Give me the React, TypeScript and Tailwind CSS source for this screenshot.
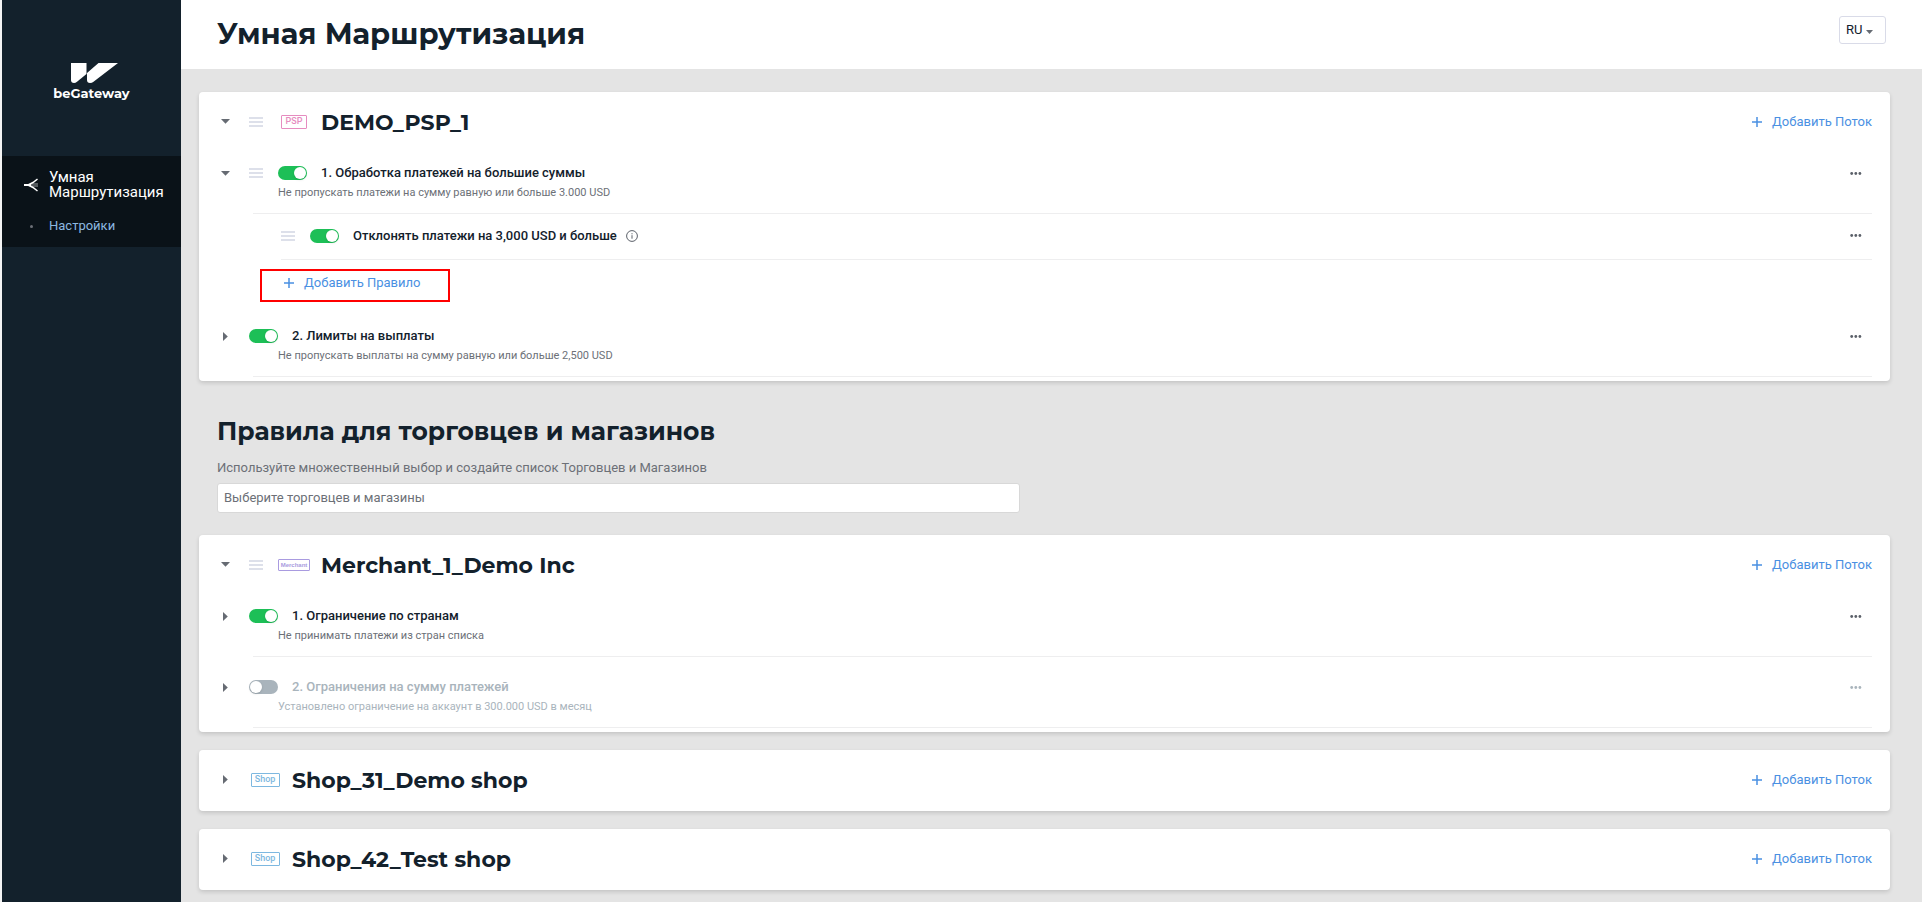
import { useState } from 'react';
import type { ReactNode } from 'react';

type BadgeKind = 'psp' | 'merchant' | 'shop';

function Caret({ open, label }: { open: boolean; label: string }) {
  return (
    <button aria-label={label} aria-expanded={open} className="flex h-5 w-[17px] shrink-0 cursor-pointer items-center justify-center text-[#666b73]">
      {open ? (
        <svg className="h-[5px] w-[9px]" viewBox="0 0 9 5" fill="currentColor">
          <path d="M0 0h9L4.500 4.800z" />
        </svg>
      ) : (
        <svg className="h-[9px] w-[5px]" viewBox="0 0 5 9" fill="currentColor">
          <path d="M0 0v9l4.800-4.500z" />
        </svg>
      )}
    </button>
  );
}

function DragHandle() {
  return (
    <svg className="h-[10px] w-[14px] shrink-0 cursor-move" viewBox="0 0 14 10" fill="#dde0ea">
      <path d="M0 0h14v2H0zM0 4h14v2H0zM0 8h14v2H0z" />
    </svg>
  );
}

function Toggle({ defaultOn, label }: { defaultOn: boolean; label: string }) {
  const [on, setOn] = useState(defaultOn);
  return (
    <label className="-mr-px flex shrink-0 cursor-pointer">
      <input type="checkbox" checked={on} onChange={() => setOn(!on)} aria-label={label} className="peer sr-only" />
      <span className="flex h-[14px] w-[29px] items-center rounded-full bg-[#a9b4bc] px-px peer-checked:justify-end peer-checked:bg-[#1dbf57]">
        <span className="h-3 w-3 rounded-full bg-white shadow" />
      </span>
    </label>
  );
}

function Badge({ kind }: { kind: BadgeKind }) {
  return (
    <span className="-mr-1 flex w-8 shrink-0 justify-center leading-none">
      {kind === 'psp' && (
        <span className="flex h-[14px] w-[26px] items-center justify-center rounded-[1px] border border-[#e68cc0] text-[9px] font-medium text-[#e68cc0]">PSP</span>
      )}
      {kind === 'merchant' && (
        <span className="flex h-3 w-8 items-center justify-center rounded-[1px] border border-[#a99be0] font-['Liberation_Sans',sans-serif] text-[6px] font-bold text-[#a99be0]">Merchant</span>
      )}
      {kind === 'shop' && (
        <span className="flex h-[14px] w-[29px] items-center justify-center rounded-[1px] border border-[#7db8e0] text-[9px] font-medium text-[#7db8e0]">Shop</span>
      )}
    </span>
  );
}

function AddButton({ children }: { children: ReactNode }) {
  return (
    <button className="flex shrink-0 cursor-pointer items-center gap-[10px] text-[13px] leading-5 text-[#4a90e2]">
      <svg className="h-[10px] w-[10px]" viewBox="0 0 10 10" stroke="currentColor" strokeWidth="1.5">
        <path d="M5 0v10M0 5h10" />
      </svg>
      {children}
    </button>
  );
}

function MoreButton({ muted = false }: { muted?: boolean }) {
  return (
    <button aria-label="Действия" className={`mr-[10px] ml-auto flex h-5 shrink-0 cursor-pointer items-center ${muted ? 'text-[#a9b4bc]' : 'text-[#5b6069]'}`}>
      <svg className="h-[3px] w-[12px]" viewBox="0 0 12 3" fill="currentColor">
        <circle cx="1.7" cy="1.5" r="1.4" />
        <circle cx="5.8" cy="1.5" r="1.4" />
        <circle cx="9.9" cy="1.5" r="1.4" />
      </svg>
    </button>
  );
}

function Card({ title, kind, open = false, draggable = false, children }: {
  title: string;
  kind: BadgeKind;
  open?: boolean;
  draggable?: boolean;
  children?: ReactNode;
}) {
  return (
    <section className="rounded bg-white px-[18px] shadow-[0_2px_4px_rgba(0,0,0,0.14)]">
      <div className="flex h-[61px] items-center gap-[15px] pb-0.5">
        <Caret open={open} label={title} />
        {draggable && <DragHandle />}
        <Badge kind={kind} />
        <h2 className="pt-0.5 font-['Montserrat','Inter',sans-serif] text-[22px] leading-7 font-bold">{title}</h2>
        <div className="ml-auto">
          <AddButton>Добавить Поток</AddButton>
        </div>
      </div>
      {children && <div className="flex flex-col gap-[10px] pb-1">{children}</div>}
    </section>
  );
}

function Flow({ title, note, open = false, draggable = false, enabled = true, children }: {
  title: string;
  note: string;
  open?: boolean;
  draggable?: boolean;
  enabled?: boolean;
  children?: ReactNode;
}) {
  return (
    <div>
      <div className="flex h-[30px] items-center gap-[15px] pt-[10px]">
        <Caret open={open} label={title} />
        {draggable && <DragHandle />}
        <Toggle defaultOn={enabled} label={title} />
        <h3 className={`text-[13px] leading-5 font-medium ${enabled ? '' : 'text-[#a9b4bc]'}`}>{title}</h3>
        <MoreButton muted={!enabled} />
      </div>
      <p className={`ml-[61px] h-[30px] text-[11px] leading-[19px] ${enabled ? 'text-[#6c7077]' : 'text-[#a9b4bc]'}`}>{note}</p>
      <hr className="ml-9 border-[#eeeeef]" />
      {children}
    </div>
  );
}

function Sidebar() {
  return (
    <aside className="w-[179px] shrink-0 bg-[#13212c]">
      <div className="flex h-[156px] flex-col items-center pt-[63px] text-white">
        <svg className="ml-1.5 h-5 w-[47px]" viewBox="0 0 47 20" fill="currentColor">
          <path d="M0 0h15.500v11L6 18.800Q4.500 20 3 20Q0 20 0 17z" />
          <path d="M27.500 0H47L22.500 18.800Q21 20 19 20Q16 20 16 17V10z" />
        </svg>
        <span className="font-['Montserrat','Inter',sans-serif] text-[13px] leading-5 font-bold">beGateway</span>
      </div>
      <nav className="flex h-[91px] flex-col gap-4 bg-[#0a1218] pt-[14px] pl-[22px]">
        <a href="#routing" className="flex items-center gap-[11px] text-[15px] leading-[15px] text-white">
          <svg className="h-[14px] w-[14px] shrink-0" viewBox="0 0 14 14" fill="none" stroke="currentColor" strokeWidth="1.500">
            <path d="M0 7h7" strokeWidth="2" />
            <path d="M7 6h7M7 8h7" strokeWidth="1.200" opacity="0.6" />
            <path d="M4 7L9 4.500L13.500 1M4 7L9 9.500L13.500 13" />
          </svg>
          <span>Умная<br />Маршрутизация</span>
        </a>
        <a href="#settings" className="flex items-center gap-[11px] text-[13px] leading-5 text-[#8cb8e0]">
          <span className="flex w-[14px] justify-center">
            <span className="h-[3px] w-[3px] rounded-full bg-[#6c7077]" />
          </span>
          Настройки
        </a>
      </nav>
    </aside>
  );
}

export default function App() {
  return (
    <div className="flex min-h-screen bg-[#e4e4e4] font-['Roboto',sans-serif] text-[#13212c]">
      <div className="w-0.5 shrink-0 bg-[#f4f4f4]" />
      <Sidebar />
      <div className="min-w-0 flex-1">
        <header className="flex h-[69px] items-start justify-between bg-white pt-4 pr-9 pl-9">
          <h1 className="font-['Montserrat','Inter',sans-serif] text-[29px] leading-9 font-bold">Умная Маршрутизация</h1>
          <button className="flex h-7 w-[47px] cursor-pointer items-center gap-1 rounded-[3px] border border-[#d9dbe8] pl-1.5 text-[13px]">
            RU
            <svg className="mt-1 h-1 w-[7px]" viewBox="0 0 7 4" fill="#666b73">
              <path d="M0 0h7L3.500 4z" />
            </svg>
          </button>
        </header>

        <main className="flex flex-col gap-[18px] pt-[23px] pr-8 pb-3 pl-[18px]">
          <Card title="DEMO_PSP_1" kind="psp" open draggable>
            <Flow title="1. Обработка платежей на большие суммы" note="Не пропускать платежи на сумму равную или больше 3.000 USD" open draggable>
              <div className="ml-16 flex h-[46px] items-center gap-[15px] border-b border-[#eeeeef] pb-0.5">
                <DragHandle />
                <Toggle defaultOn label="Отклонять платежи на 3,000 USD и больше" />
                <h4 className="text-[13px] leading-5 font-medium">Отклонять платежи на 3,000 USD и больше</h4>
                <svg className="-ml-1.5 h-3 w-3 shrink-0" viewBox="0 0 12 12" fill="none" stroke="#5b6069">
                  <circle cx="6" cy="6" r="5.400" />
                  <path d="M6 5.200v3.500M6 3.200v1.100" />
                </svg>
                <MoreButton />
              </div>
              {/* highlighted action */}
              <div className="mt-[9px] mb-1 ml-[43px] flex h-[33px] w-[190px] border-2 border-[#ff0000] pt-0.5 pl-[22px]">
                <div className="h-5">
                  <AddButton>Добавить Правило</AddButton>
                </div>
              </div>
            </Flow>
            <Flow title="2. Лимиты на выплаты" note="Не пропускать выплаты на сумму равную или больше 2,500 USD" />
          </Card>

          <div className="px-[18px] pt-[14px] pb-1">
            <h2 className="font-['Montserrat','Inter',sans-serif] text-[25px] leading-9 font-bold">Правила для торговцев и магазинов</h2>
            <label htmlFor="merchants" className="mt-[9px] block text-[13px] leading-5 text-[#6c7077]">
              Используйте множественный выбор и создайте список Торговцев и Магазинов
            </label>
            <input
              id="merchants"
              type="text"
              placeholder="Выберите торговцев и магазины"
              className="mt-[5px] block h-[30px] w-1/2 max-w-[803px] rounded-[3px] border border-[#d8d8d8] bg-white px-1.5 pb-0.5 text-[13px] placeholder:text-[#6c7077]"
            />
          </div>

          <Card title="Merchant_1_Demo Inc" kind="merchant" open draggable>
            <Flow title="1. Ограничение по странам" note="Не принимать платежи из стран списка" />
            <Flow title="2. Ограничения на сумму платежей" note="Установлено ограничение на аккаунт в 300.000 USD в месяц" enabled={false} />
          </Card>
          <Card title="Shop_31_Demo shop" kind="shop" />
          <Card title="Shop_42_Test shop" kind="shop" />
        </main>
      </div>
    </div>
  );
}
